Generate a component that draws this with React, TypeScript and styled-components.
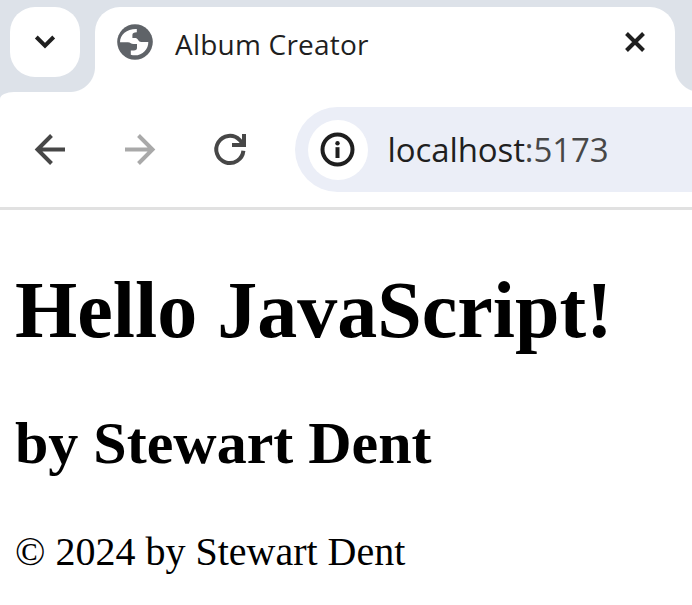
import React from 'react';
import styled, { createGlobalStyle } from 'styled-components';

const GlobalStyle = createGlobalStyle`
  * { box-sizing: border-box; }
  body { margin: 0; background: #fff; overflow: hidden; }
`;

const Browser = styled.div`
  width: 692px;
  height: 605px;
  overflow: hidden;
  background: #fff;
`;

const TabStrip = styled.header`
  display: flex;
  height: 92px;
  padding: 7px 0 0 10px;
  gap: 15px;
  background: #dde2e9;
`;

const TabSearch = styled.button`
  display: grid;
  place-items: center;
  width: 70px;
  height: 70px;
  padding: 0;
  border: 0;
  border-radius: 25px;
  background: #fff;
`;

const Tab = styled.div`
  position: relative;
  display: flex;
  align-items: center;
  width: 580px;
  height: 85px;
  padding: 0 25px 15px 20px;
  border-radius: 25px 25px 0 0;
  background: #fff;
  flex: none;

  &::before,
  &::after {
    content: '';
    position: absolute;
    bottom: 0;
    width: 25px;
    height: 25px;
  }
  &::before {
    right: 100%;
    background: radial-gradient(circle at 0 0, transparent 24.5px, #fff 25.5px);
  }
  &::after {
    left: 100%;
    background: radial-gradient(circle at 100% 0, transparent 24.5px, #fff 25.5px);
  }
`;

const TabTitle = styled.span`
  flex: 1;
  margin: 4px 0 0 20px;
  font: 400 28px/40px 'Open Sans', sans-serif;
  letter-spacing: 0.22px;
  color: #1f1f1f;
  white-space: nowrap;
`;

const ToolbarBacking = styled.div`
  background: #dde2e9;
`;

const Toolbar = styled.nav`
  display: flex;
  align-items: center;
  height: 118px;
  padding-left: 30px;
  border-bottom: 3px solid #e1e1e1;
  border-top-left-radius: 14px 7px;
  background: #fff;
`;

const NavButton = styled.button<{ $disabled?: boolean }>`
  display: grid;
  place-items: center;
  width: 40px;
  height: 40px;
  margin-right: 50px;
  padding: 0;
  border: 0;
  background: none;
  color: ${(p) => (p.$disabled ? '#a9a9a9' : '#474747')};
`;

const AddressBar = styled.div`
  display: flex;
  align-items: center;
  flex: 1;
  height: 85px;
  margin-left: -5px;
  padding-left: 12.5px;
  border-radius: 42.5px 0 0 42.5px;
  background: #ebeef7;
`;

const SiteInfo = styled.span`
  display: grid;
  place-items: center;
  width: 60px;
  height: 60px;
  border-radius: 50%;
  background: #fff;
`;

const Address = styled.span`
  margin-left: 20px;
  font: 400 33px/48px 'Open Sans', sans-serif;
  letter-spacing: -0.1px;
  color: #1f1f1f;
  white-space: nowrap;
`;

const Port = styled.span`
  color: #474747;
`;

const Page = styled.main`
  padding: 54px 15px 0;
  font-family: 'Liberation Serif', serif;
  color: #000;
  white-space: nowrap;
`;

const Title = styled.h1`
  margin: 0;
  font-size: 80px;
  line-height: 92px;
`;

const Byline = styled.h2`
  margin: 52px 0 0;
  font-size: 60px;
  line-height: 70px;
`;

const Copyright = styled.p`
  margin: 51px 0 0;
  font-size: 40px;
  line-height: 46px;
`;

const stroke = { fill: 'none', stroke: 'currentColor', strokeWidth: 4 };

export default function App() {
  return (
    <Browser>
      <GlobalStyle />
      <TabStrip>
        <TabSearch aria-label="Search tabs">
          <svg width="30" height="30" viewBox="30 27 30 30" color="#1f1f1f">
            <path d="M36.3 37 45 45.6 53.7 37" {...stroke} />
          </svg>
        </TabSearch>
        <Tab>
          <svg width="40" height="40" viewBox="0 0 40 40">
            <circle cx="20" cy="20" r="17.8" fill="#5f6368" />
            <path
              fill="#fff"
              d="M5 20.3C5 12.5 12 6.7 21.8 7v3.2c-3 0-4.400 1-4.400 2.700v3h3.200c2.400 0 2.600 4 5.600 4h7.100c.3 8-7.500 15.500-17.500 12.900v-4.300h3c2.200 0 3.200-1 3.200-2.800v-3.600h-3.500c-2.400 0-3-1.800-5.600-1.800H5Z"
            />
          </svg>
          <TabTitle>Album Creator</TabTitle>
          <svg width="30" height="30" viewBox="620 27 30 30" color="#1f1f1f">
            <path d="m626.5 33.5 17 17m0-17-17 17" {...stroke} />
          </svg>
        </Tab>
      </TabStrip>
      <ToolbarBacking>
        <Toolbar>
          <NavButton aria-label="Back">
            <svg width="40" height="40" viewBox="30 130 40 40">
              <path d="M65 149.500H38M51.500 135.500l-14 14 14 14" {...stroke} />
            </svg>
          </NavButton>
          <NavButton $disabled aria-label="Forward">
            <svg width="40" height="40" viewBox="120 130 40 40">
              <path d="M125 149.500h27M138.500 135.500l14 14-14 14" {...stroke} />
            </svg>
          </NavButton>
          <NavButton aria-label="Reload">
            <svg width="40" height="40" viewBox="210 130 40 40">
              <path d="M243.400 150.800A13.600 13.600 0 1 1 239.500 139.800L243.500 144.500M244 134v11h-12" {...stroke} />
            </svg>
          </NavButton>
          <AddressBar>
            <SiteInfo>
              <svg width="40" height="40" viewBox="0 0 40 40" color="#1f1f1f">
                <circle cx="19.5" cy="19.5" r="15" {...stroke} />
                <circle cx="19.5" cy="13.2" r="2.2" fill="currentColor" />
                <path d="M19.500 17.200v10.800" {...stroke} />
              </svg>
            </SiteInfo>
            <Address>localhost<Port>:5173</Port></Address>
          </AddressBar>
        </Toolbar>
      </ToolbarBacking>
      <Page>
        <Title>Hello JavaScript!</Title>
        <Byline>by Stewart Dent</Byline>
        <Copyright>© 2024 by Stewart Dent</Copyright>
      </Page>
    </Browser>
  );
}
